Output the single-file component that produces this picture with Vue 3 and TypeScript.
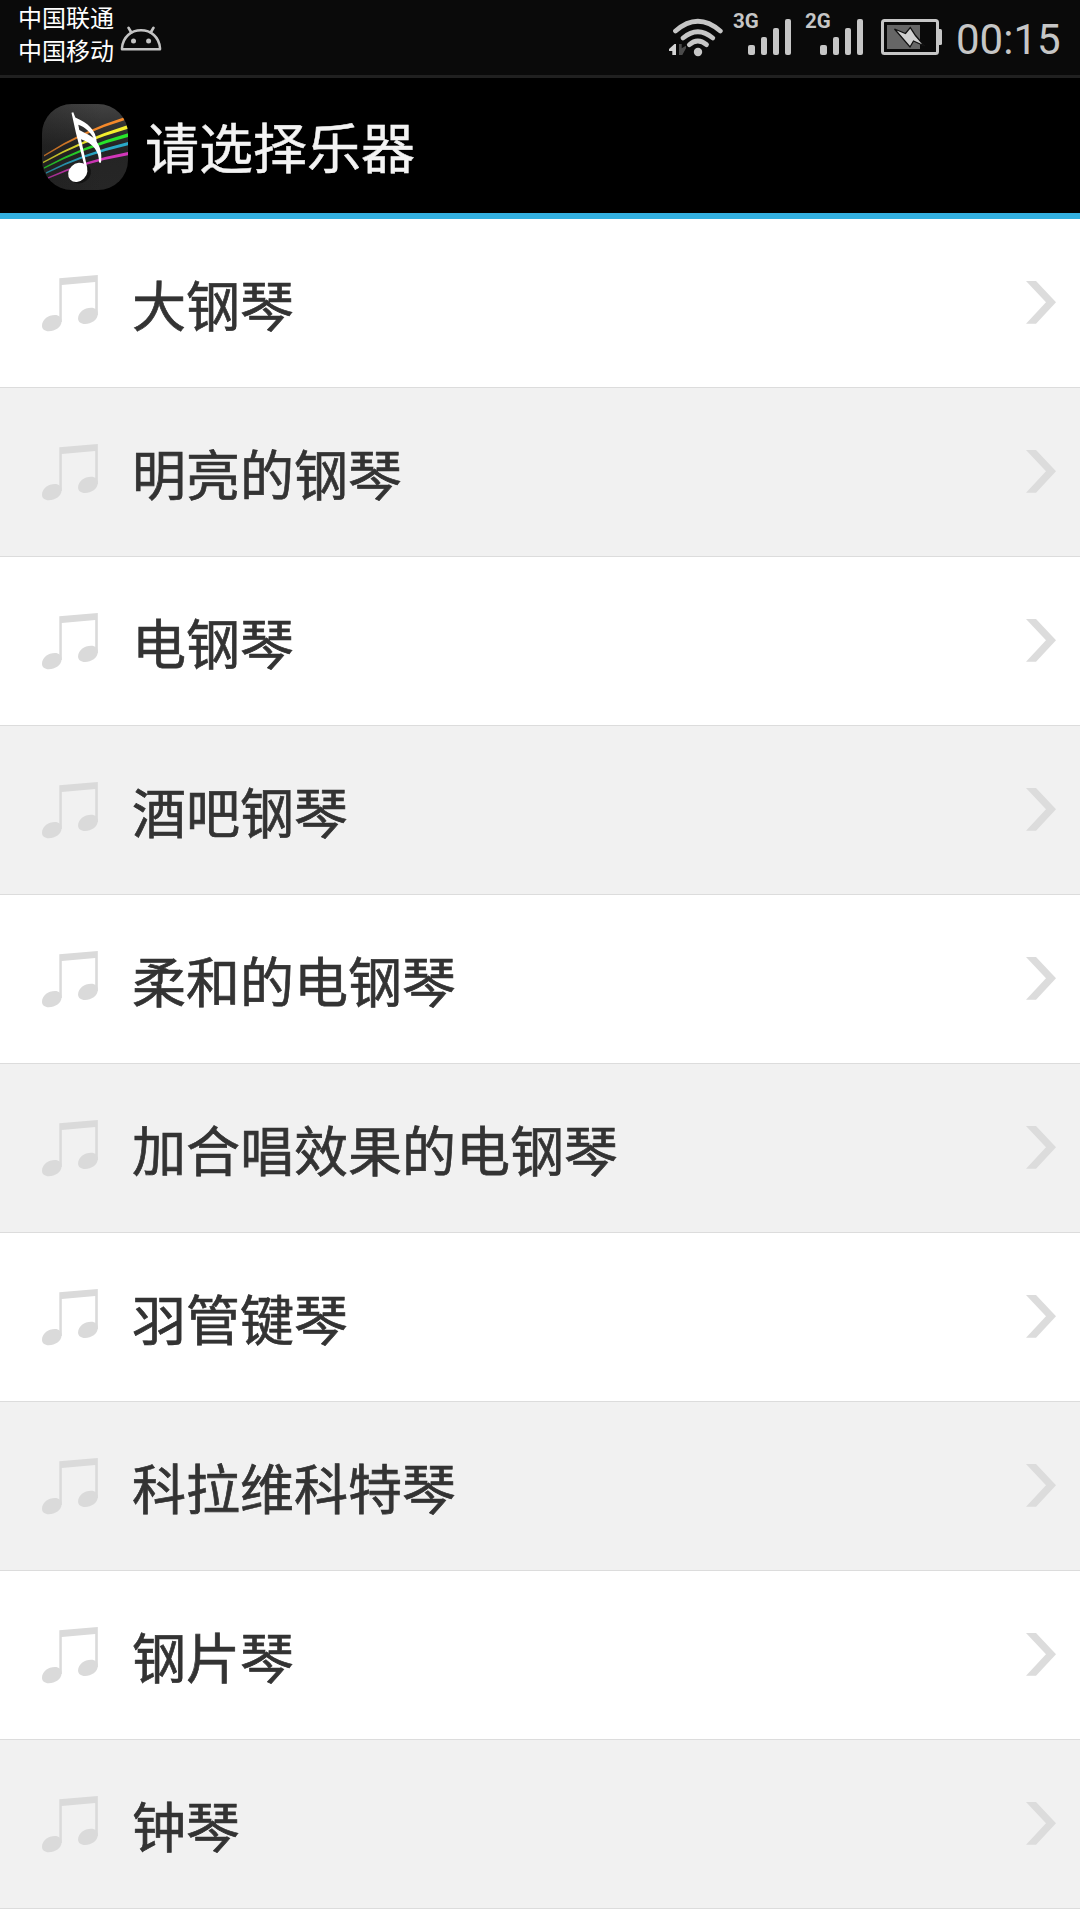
<script setup lang="ts">
const carriers: string[] = ['中国联通', '中国移动']
const networks: string[] = ['3G', '2G']
const instruments: string[] = [
  '大钢琴',
  '明亮的钢琴',
  '电钢琴',
  '酒吧钢琴',
  '柔和的电钢琴',
  '加合唱效果的电钢琴',
  '羽管键琴',
  '科拉维科特琴',
  '钢片琴',
  '钟琴',
]
</script>

<template>
  <div class="screen">
    <header class="status">
      <div class="carriers">
        <span v-for="name in carriers" :key="name">{{ name }}</span>
      </div>
      <svg class="android" width="42" height="26" viewBox="0 0 42 26" fill="none" stroke="#c3c3c3">
        <path d="M2 23.3V22C3 11 11 4.300 21 4.300S39 11 40 22v1.300z" stroke-width="2.500" stroke-linejoin="round" />
        <path d="M8.600 1.800l2.700 4.700M33.400 1.800l-2.700 4.700" stroke-width="2.700" stroke-linecap="round" />
        <circle cx="13.500" cy="15" r="2.500" fill="#c3c3c3" stroke="none" />
        <circle cx="28.600" cy="15" r="2.500" fill="#c3c3c3" stroke="none" />
      </svg>
      <div class="indicators">
        <svg class="wifi" width="56" height="40" viewBox="0 0 56 40" fill="none">
          <g stroke="#c6c6c6" stroke-width="4.800" stroke-linecap="round">
            <path d="M6.500 13Q28.800-6.500 51.300 13" />
            <path d="M14 20Q28.800 7.500 43.800 20" />
            <path d="M20.300 26.700Q28.800 19.300 37.500 26.700" />
          </g>
          <circle cx="29" cy="34" r="4.200" fill="#c6c6c6" />
          <path d="M0 31L5.500 26H7v11H3.300v-4H0z" fill="#d4d4d4" />
          <path d="M10 26h2.700v4.300l4.300-2.600v2.600L13.300 37H10z" fill="#4b4b4b" />
        </svg>
        <div v-for="net in networks" :key="net" class="network">
          <span class="net-label">{{ net }}</span>
          <svg width="44" height="36" viewBox="0 0 44 36" fill="#c6c6c6">
            <rect x="0" y="26" width="7" height="10" rx="2" />
            <rect x="13" y="18" width="6" height="18" rx="2" />
            <rect x="25" y="9" width="6" height="27" rx="2" />
            <rect x="37" y="0" width="6" height="36" rx="2" />
          </svg>
        </div>
        <svg class="battery" width="61" height="36" viewBox="0 0 61 36">
          <rect x="1.500" y="1.500" width="55" height="33" rx="2" fill="none" stroke="#c6c6c6" stroke-width="3" />
          <path d="M58 10h1.500q1.500 0 1.500 1.500v13q0 1.500-1.500 1.500H58z" fill="#c6c6c6" />
          <rect x="6" y="6" width="33" height="24" fill="#666" />
          <path
            d="M13.500 10L24.500 14.500 29.300 8.700 34.500 16.500 43.500 27 32.500 22 29 28z"
            fill="#d0d0d0"
            stroke="#101010"
            stroke-width="1.300"
          />
        </svg>
        <time class="clock">00:15</time>
      </div>
    </header>

    <div class="title-bar">
      <svg class="app-icon" width="86" height="86" viewBox="0 0 86 86">
        <defs>
          <linearGradient id="tile" x1="0" y1="0" x2="0" y2="1">
            <stop offset="0" stop-color="#424242" />
            <stop offset="0.5" stop-color="#242424" />
            <stop offset="1" stop-color="#262626" />
          </linearGradient>
          <linearGradient id="fade" x1="0" y1="0" x2="1" y2="0">
            <stop offset="0" stop-color="#181818" stop-opacity=".3" />
            <stop offset="0.7" stop-color="#181818" stop-opacity="0" />
          </linearGradient>
          <clipPath id="tile-shape"><rect width="86" height="86" rx="30" /></clipPath>
        </defs>
        <g clip-path="url(#tile-shape)">
          <rect width="86" height="86" fill="url(#tile)" />
          <path d="M2 51Q40 26.300 86 12V15Q40 28.800 2 52.400z" fill="#f5892a" />
          <path d="M1 57.800Q40 35.300 86 21V24.800Q40 37.800 1 59.200z" fill="#f4ee2e" />
          <path d="M2 63.300Q40 42.300 86 29.300V33Q40 44.800 2 64.700z" fill="#27e52a" />
          <path d="M4 68.300Q40 49.300 86 38V41.300Q40 51.800 4 69.700z" fill="#29a9c8" />
          <path d="M6 73.300Q42 56.300 86 48V51.300Q42 58.800 6 74.700z" fill="#d236b9" />
          <rect width="86" height="86" fill="url(#fade)" />
          <ellipse cx="39" cy="70" rx="11" ry="8.500" transform="rotate(-38 39 70)" fill="#000" opacity=".45" />
          <g fill="#fff">
            <ellipse cx="35.800" cy="68.300" rx="10.500" ry="8.700" transform="rotate(-45 35.800 68.300)" />
            <path
              d="M29.500 8.700L31.300 8.300L33.300 13.500C46.300 19.300 54 26 54.700 37.700L53.300 37C49.700 29.300 43 22.700 36.300 20.700L37.300 26C44.700 30 53 33.300 55.300 38.700C59 44.300 60 51 59 58.700L57 58.500C57.300 47.700 51.300 39.300 39 35.300L45.300 64.300L43 64.300L34 29.300z"
            />
          </g>
        </g>
      </svg>
      <h1>请选择乐器</h1>
    </div>

    <ul class="list">
      <li v-for="item in instruments" :key="item">
        <svg class="note" width="56" height="57" viewBox="0 0 56 57" fill="#dadada">
          <path d="M17.300 3.200L55.800 0v40h-2.600V7L19.800 10v37h-2.500z" />
          <path d="M0 50.800C0 44.600 6 40 13 40C17 40 19.600 42.500 19.600 46C19.600 52 13 56.300 6.800 56.300C2.500 56.300 0 54 0 50.800z" />
          <path d="M36.100 43.600C36.100 37.400 42.200 32.800 49.200 32.800C53.200 32.800 55.800 35.300 55.800 38.800C55.800 44.800 49.200 49.100 43 49.100C38.700 49.100 36.100 46.800 36.100 43.600z" />
        </svg>
        <span class="name">{{ item }}</span>
        <svg class="chevron" width="30" height="43" viewBox="0 0 30 43" fill="#dcdcdc">
          <path d="M0 0h10l20 21.300L10 42.700H0l20-21.400z" />
        </svg>
      </li>
    </ul>
  </div>
</template>

<style>
body {
  margin: 0;
  background: #fff;
}
</style>

<style scoped>
.screen {
  width: 1080px;
  height: 1920px;
  overflow: hidden;
  background: #fff;
  font-family: 'Noto Sans CJK SC', sans-serif;
}
.status {
  box-sizing: border-box;
  height: 78px;
  display: flex;
  align-items: flex-start;
  background: #0a0a0a;
  border-bottom: 3px solid #202020;
}
.carriers {
  display: flex;
  flex-direction: column;
  width: 96px;
  padding: 1.300px 0 0 18px;
  font-size: 24px;
  line-height: 32.500px;
  color: #fff;
}
.android {
  margin: 26px 0 0 6px;
}
.indicators {
  display: flex;
  align-items: flex-start;
  margin-left: auto;
  padding-right: 19px;
}
.wifi {
  margin-top: 18px;
  margin-right: 8px;
}
.network {
  display: flex;
  width: 72px;
  height: 55px;
  align-items: flex-end;
  position: relative;
}
.network svg {
  margin-left: 15px;
}
.net-label {
  position: absolute;
  left: 0;
  top: 10px;
  font: 700 20.500px/22px Roboto, sans-serif;
  color: #c6c6c6;
}
.battery {
  margin: 19px 0 0 4px;
}
.clock {
  width: 105px;
  margin: 17px 0 0 14px;
  font: 400 42px/46px Roboto, sans-serif;
  color: #c6c6c6;
  white-space: nowrap;
}
.title-bar {
  box-sizing: border-box;
  height: 141px;
  display: flex;
  align-items: flex-start;
  padding-left: 42px;
  background: #000;
  border-bottom: 6px solid #33b0e0;
}
.app-icon {
  margin-top: 26px;
}
h1 {
  margin: 28px 0 0 17px;
  font-size: 54px;
  line-height: 80px;
  font-weight: 400;
  color: #f3f3f3;
  -webkit-text-stroke: 0.500px #f3f3f3;
}
.list {
  margin: 0;
  padding: 0;
  list-style: none;
}
li {
  box-sizing: border-box;
  height: 169px;
  display: flex;
  align-items: flex-start;
  padding: 0 24px 0 42px;
  border-bottom: 1px solid #dcdcdc;
}
li:nth-child(even) {
  background: #f1f1f1;
}
.note {
  margin-top: 56px;
}
.name {
  margin: 45px 0 0 34px;
  font-size: 54px;
  line-height: 80px;
  font-weight: 400;
  color: #333;
  -webkit-text-stroke: 0.700px #333;
}
.chevron {
  margin: 62px 0 0 auto;
}
</style>
